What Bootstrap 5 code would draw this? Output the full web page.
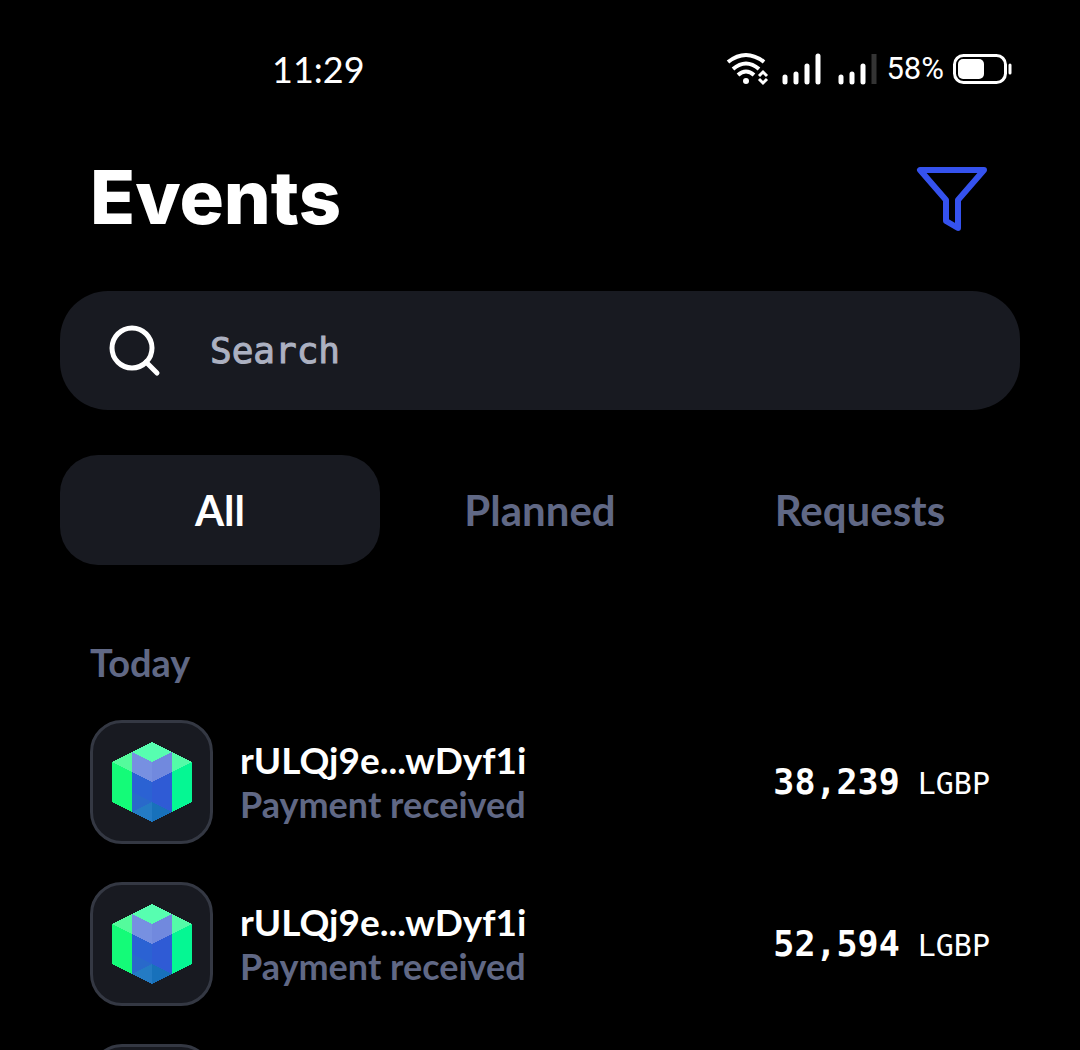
<!DOCTYPE html>
<html lang="en">
<head>
    <meta charset="UTF-8">
    <meta name="viewport" content="width=device-width, initial-scale=1.0">
    <title>Events</title>
    <link href="https://cdn.jsdelivr.net/npm/bootstrap@5.3.2/dist/css/bootstrap.min.css" rel="stylesheet">
    <style>
        body {
            background-color: #000;
            color: #fff;
            font-family: Lato, sans-serif;
        }
        .app {
            padding: 0 60px;
        }
        .status-bar {
            height: 138px;
            padding: 0 8px 0 212px;
        }
        .clock {
            font-size: 36px;
        }
        .battery-text {
            font-family: Roboto, sans-serif;
            font-size: 31px;
        }
        .title-bar {
            height: 118px;
            padding: 0 30px;
        }
        .title-bar h1 {
            font-family: Inter, sans-serif;
            font-size: 74px;
            font-weight: 800;
        }
        .search-box {
            height: 119px;
            padding: 0 48px;
            gap: 48px;
            margin-top: 35px;
            border-radius: 48px;
            background-color: #181a21;
        }
        .search-box input {
            font-family: "DejaVu Sans Mono", monospace;
            font-size: 36px;
            color: #fff;
        }
        .search-box input::placeholder {
            color: #acb1c1;
            opacity: 1;
            -webkit-text-stroke: 1px #acb1c1;
        }
        .event-tabs {
            margin-top: 45px;
        }
        .event-tabs .nav-link {
            height: 110px;
            border-radius: 38px;
            font-size: 42px;
            line-height: 60px;
            font-weight: 700;
            color: #606885;
        }
        .event-tabs .nav-link.active {
            background-color: #181a21;
            color: #fff;
        }
        .events {
            padding: 0 30px;
            margin-top: 70px;
        }
        .day {
            font-size: 38px;
            line-height: 54px;
            font-weight: 700;
            color: #606885;
        }
        .event-list {
            gap: 38px;
            margin-top: 31px;
        }
        .event-list li {
            gap: 27px;
        }
        .avatar {
            width: 123px;
            height: 124px;
            border: 3px solid #343843;
            border-radius: 32px;
            background-color: #181a21;
        }
        .account {
            font-size: 37px;
            line-height: 44px;
            font-weight: 700;
        }
        .kind {
            font-size: 36px;
            color: #606885;
        }
        .amount {
            gap: 18px;
            font-family: "DejaVu Sans Mono", monospace;
            font-size: 35px;
            font-weight: 700;
        }
        .currency {
            font-size: 30px;
            font-weight: 400;
        }
    </style>
</head>
<body>
    <!-- Shared token artwork -->
    <svg class="d-none">
        <symbol id="cube" viewBox="0 0 80 80">
            <g shape-rendering="crispEdges">
                <path fill="#57feb0" d="M40 0 60 10 40 20 20 10z"/>
                <path fill="#54fb9c" d="M20 10V30L0 20z"/>
                <path fill="#54fba8" d="M60 10V30L80 20z"/>
                <path fill="#14fb78" d="M0 20 20 30V70L0 60z"/>
                <path fill="#05f793" d="M80 20 60 30V70L80 60z"/>
                <path fill="#7790e1" d="M20 10 40 20V40L20 30z"/>
                <path fill="#7189de" d="M60 10 40 20V40L60 30z"/>
                <path fill="#2b62d3" d="M20 30 40 40V80L20 70z"/>
                <path fill="#2f5bd5" d="M60 30 40 40V80L60 70z"/>
                <path fill="#2969ca" d="M20 50 40 60 20 70z"/>
                <path fill="#247bc4" d="M20 70 40 60V80z"/>
                <path fill="#1871bb" d="M60 70 40 60V80z"/>
            </g>
        </symbol>
    </svg>

    <div class="app vh-100 overflow-hidden d-flex flex-column">
        <!-- Status bar -->
        <div class="status-bar d-flex align-items-center justify-content-between flex-shrink-0">
            <span class="clock">11:29</span>
            <div class="d-flex align-items-center">
                <svg width="160" height="40" viewBox="0 0 160 40" fill="none" stroke="#fff" aria-hidden="true">
                    <g stroke-width="4">
                        <path d="M2 13Q20-1 38 13M7 20Q20 9 33 20M12 26Q20 19 28 26"/>
                        <path d="M33 27 37 23 41 27M33 30 37 34 41 30" stroke-width="3"/>
                    </g>
                    <circle cx="20" cy="32" r="3" fill="#fff" stroke="none"/>
                    <path d="M59 28V33M70 25V33M81 17V33M92 7V33M115 28V33M126 25V33M137 17V33" stroke-width="5" stroke-linecap="round"/>
                    <path d="M148 5V35" stroke="#343434" stroke-width="5"/>
                </svg>
                <span class="battery-text">58%</span>
                <svg class="ms-2" width="60" height="32" viewBox="0 0 60 32" fill="none" aria-hidden="true">
                    <rect x="2.500" y="2.500" width="51" height="27" rx="9" stroke="#fff" stroke-width="3"/>
                    <rect x="6" y="6" width="26" height="20" rx="5" fill="#fff"/>
                    <path d="M58 12V20" stroke="#fff" stroke-width="3" stroke-linecap="round"/>
                </svg>
            </div>
        </div>

        <header class="title-bar d-flex align-items-center justify-content-between flex-shrink-0">
            <h1 class="m-0">Events</h1>
            <button type="button" class="btn p-0 border-0" aria-label="Filter">
                <svg class="d-block" width="76" height="70" viewBox="0 0 76 70" fill="none" stroke="#3552ee" stroke-width="6" stroke-linejoin="round">
                    <path d="M6 8H70L44 38V66L32 59V38z"/>
                </svg>
            </button>
        </header>

        <div class="search-box d-flex align-items-center flex-shrink-0">
            <label for="search" aria-label="Search">
                <svg class="d-block" width="54" height="54" viewBox="0 0 54 54" fill="none" stroke="#fff" stroke-width="5">
                    <circle cx="24" cy="24" r="20"/>
                    <path d="M38 38 49 49" stroke-linecap="round"/>
                </svg>
            </label>
            <input type="text" class="form-control bg-transparent border-0 shadow-none p-0" id="search" placeholder="Search">
        </div>

        <nav class="event-tabs nav nav-pills nav-fill row g-0 flex-shrink-0">
            <div class="col-4"><button type="button" class="nav-link active w-100">All</button></div>
            <div class="col-4"><button type="button" class="nav-link w-100">Planned</button></div>
            <div class="col-4"><button type="button" class="nav-link w-100">Requests</button></div>
        </nav>

        <section class="events flex-shrink-0">
            <h2 class="day mb-0">Today</h2>
            <ul class="event-list list-unstyled d-flex flex-column mb-0">
                <li class="d-flex align-items-center">
                    <div class="avatar d-flex align-items-center justify-content-center"><svg width="80" height="80"><use href="#cube"/></svg></div>
                    <div class="account flex-grow-1">
                        <div>rULQj9e...wDyf1i</div>
                        <div class="kind">Payment received</div>
                    </div>
                    <div class="amount d-flex align-items-baseline">38,239 <span class="currency">LGBP</span></div>
                </li>
                <li class="d-flex align-items-center">
                    <div class="avatar d-flex align-items-center justify-content-center"><svg width="80" height="80"><use href="#cube"/></svg></div>
                    <div class="account flex-grow-1">
                        <div>rULQj9e...wDyf1i</div>
                        <div class="kind">Payment received</div>
                    </div>
                    <div class="amount d-flex align-items-baseline">52,594 <span class="currency">LGBP</span></div>
                </li>
                <li class="d-flex align-items-center">
                    <div class="avatar d-flex align-items-center justify-content-center"><svg width="80" height="80"><use href="#cube"/></svg></div>
                </li>
            </ul>
        </section>
    </div>

    <!-- Bootstrap JS -->
    <script src="https://cdn.jsdelivr.net/npm/bootstrap@5.3.2/dist/js/bootstrap.bundle.min.js"></script>
</body>
</html>
